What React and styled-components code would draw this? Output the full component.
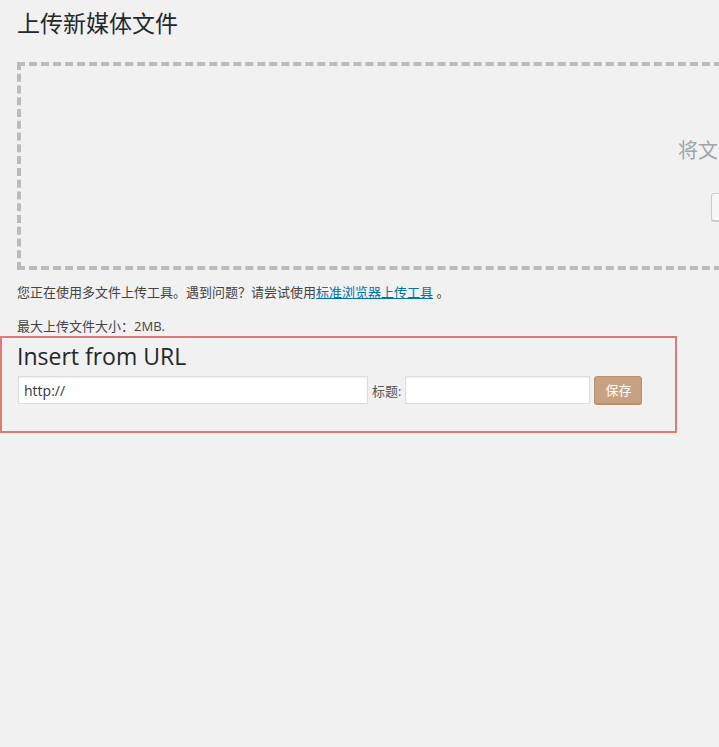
import styled, { createGlobalStyle } from "styled-components";

const GlobalStyle = createGlobalStyle`
  html, body {
    margin: 0;
    padding: 0;
    background: #f1f1f1;
  }

  body {
    font-family: "Open Sans", "Noto Sans CJK SC", sans-serif;
    font-size: 13px;
    color: #444;
    overflow: hidden;
  }
`;

const Page = styled.div`
  min-height: 747px;
  overflow: hidden;
`;

const Inner = styled.div`
  padding-left: 17px;
`;

const PageTitle = styled.h1`
  margin: 0;
  padding: 9px 0 4px;
  font-size: 23px;
  font-weight: 400;
  line-height: 29px;
  color: #23282d;
`;

// drop zone is wider than the window, only its left part shows
const DropArea = styled.div`
  box-sizing: border-box;
  width: 1462px;
  height: 208px;
  margin-top: 20px;
  border: 4px dashed #b9bcbf;
`;

const DropInside = styled.div`
  width: 250px;
  margin: 70px auto 0;
  text-align: center;
`;

const DropInfo = styled.p`
  margin: 0;
  font-size: 20px;
  line-height: 30px;
  color: #a0a5aa;
`;

const DropOr = styled.p`
  margin: 3px 0 0;
  font-size: 14px;
  line-height: 20px;
  color: #a0a5aa;
`;

const SelectButton = styled.button`
  box-sizing: border-box;
  height: 28px;
  margin-top: 4px;
  padding: 0 10px;
  font: inherit;
  font-size: 13px;
  color: #555;
  background: #f7f7f7;
  border: 1px solid #ccc;
  border-radius: 3px;
  box-shadow: 0 1px 0 #ccc;
`;

const Note = styled.p`
  margin: ${(p) => p.$top}px 0 0;
  line-height: 20px;
  color: #444;
`;

const Link = styled.a`
  color: #0073aa;
  text-decoration: underline;
`;

const UrlBox = styled.section`
  box-sizing: border-box;
  width: 677px;
  padding: 4px 15px 27px;
  border: 2px solid #e07a78;
`;

const UrlTitle = styled.h2`
  margin: 0;
  font-size: 23px;
  font-weight: 400;
  line-height: 29px;
  color: #23282d;
`;

const UrlRow = styled.div`
  display: flex;
  align-items: center;
  gap: 4px;
  margin-top: 5px;
  padding-left: 1px;
`;

const TextInput = styled.input`
  box-sizing: border-box;
  width: ${(p) => p.$width}px;
  height: 28px;
  padding: 3px 5px;
  font-family: "Open Sans", "Noto Sans CJK SC", sans-serif;
  font-size: 14px;
  color: #32373c;
  background: #fff;
  border: 1px solid #ddd;
  box-shadow: inset 0 1px 2px rgba(0, 0, 0, 0.07);
  outline: none;
`;

const FieldLabel = styled.label`
  font-size: 13px;
  color: #555;
`;

const SaveButton = styled.button`
  box-sizing: border-box;
  height: 28px;
  width: 48px;
  margin-top: -1px;
  padding: 0;
  font-family: "Open Sans", "Noto Sans CJK SC", sans-serif;
  font-size: 13px;
  color: #fff;
  background: #c8a183;
  border: 1px solid #b8916f;
  border-radius: 3px;
  box-shadow: 0 1px 0 #b8916f;
`;

export default function App() {
  return (
    <Page>
      <GlobalStyle />
      <Inner>
        <PageTitle>上传新媒体文件</PageTitle>
        <DropArea>
          <DropInside>
            <DropInfo>将文件拖到这里</DropInfo>
            <DropOr>或</DropOr>
            <SelectButton type="button">选择文件</SelectButton>
          </DropInside>
        </DropArea>
        <Note $top={12}>
          您正在使用多文件上传工具。遇到问题？请尝试使用
          <Link href="#">标准浏览器上传工具</Link> 。
        </Note>
        <Note $top={14}>最大上传文件大小：2MB.</Note>
      </Inner>
      <UrlBox>
        <UrlTitle>Insert from URL</UrlTitle>
        <UrlRow>
          <TextInput $width={350} defaultValue="http://" />
          <FieldLabel>标题:</FieldLabel>
          <TextInput $width={185} />
          <SaveButton type="button">保存</SaveButton>
        </UrlRow>
      </UrlBox>
    </Page>
  );
}
